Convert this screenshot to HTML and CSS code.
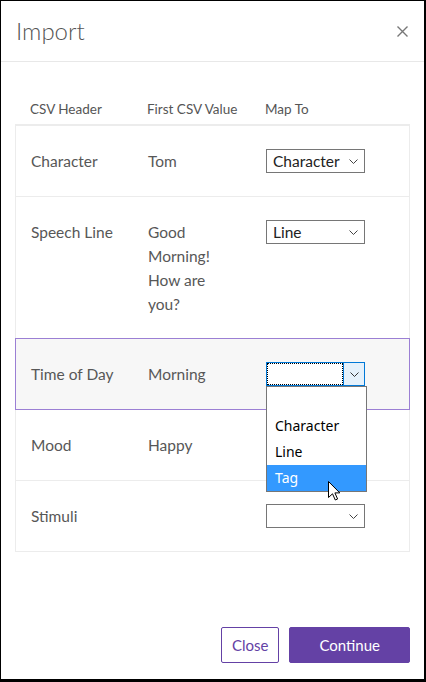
FILE: index.html
```html
<!DOCTYPE html>
<html lang="en">
<head>
<meta charset="utf-8">
<title>Import</title>
<link rel="stylesheet" href="styles.css">
</head>
<body>
<div class="window">
  <header class="dlg-head">
    <h1 class="title">Import</h1>
    <button class="close-x" aria-label="Close">
      <svg width="11" height="11" viewBox="0 0 11 11"><path d="M0.5 0.5 L10.5 10.5 M10.5 0.5 L0.5 10.5" stroke="#777" stroke-width="1.4" fill="none"/></svg>
    </button>
  </header>
  <main class="dlg-body">
    <div class="cols">
      <span>CSV Header</span><span>First CSV Value</span><span>Map To</span>
    </div>
    <div class="table">
      <div class="row">
        <div class="cell">Character</div>
        <div class="cell">Tom</div>
        <div class="cell"><div class="sel"><span class="sel-val">Character</span><svg class="chev" width="9" height="5" viewBox="0 0 9 5"><path d="M0.5 0.5 L4.5 4.5 L8.5 0.5" stroke="#444" fill="none"/></svg></div></div>
      </div>
      <div class="row">
        <div class="cell">Speech Line</div>
        <div class="cell"><span class="wrap">Good Morning! How are you?</span></div>
        <div class="cell"><div class="sel"><span class="sel-val">Line</span><svg class="chev" width="9" height="5" viewBox="0 0 9 5"><path d="M0.5 0.5 L4.5 4.5 L8.5 0.5" stroke="#444" fill="none"/></svg></div></div>
      </div>
      <div class="row selected">
        <div class="cell">Time of Day</div>
        <div class="cell">Morning</div>
        <div class="cell map">
          <div class="sel open">
            <span class="sel-focus"></span>
            <span class="sel-btn"><svg width="9" height="5" viewBox="0 0 9 5"><path d="M0.5 0.5 L4.5 4.5 L8.5 0.5" stroke="#333" fill="none"/></svg></span>
          </div>
          <ul class="dropdown">
            <li class="opt">&nbsp;</li>
            <li class="opt">Character</li>
            <li class="opt">Line</li>
            <li class="opt hl">Tag</li>
            <li class="cursor"><svg width="13" height="20" viewBox="0 0 13 20"><path d="M0.5 0.5 L0.5 16.5 L4.5 12.8 L7.3 19 L9.6 18 L6.9 11.9 L11.8 11.9 Z" fill="#fff" stroke="#000" stroke-width="1" stroke-linejoin="miter"/></svg></li>
          </ul>
        </div>
      </div>
      <div class="row">
        <div class="cell">Mood</div>
        <div class="cell">Happy</div>
        <div class="cell"></div>
      </div>
      <div class="row">
        <div class="cell">Stimuli</div>
        <div class="cell"></div>
        <div class="cell"><div class="sel"><span class="sel-val"></span><svg class="chev" width="9" height="5" viewBox="0 0 9 5"><path d="M0.5 0.5 L4.5 4.5 L8.5 0.5" stroke="#444" fill="none"/></svg></div></div>
      </div>
    </div>
  </main>
  <footer class="dlg-foot">
    <button class="btn ghost">Close</button>
    <button class="btn primary">Continue</button>
  </footer>
</div>
</body>
</html>
```

FILE: styles.css
```css
* { box-sizing: border-box; }
html, body { margin: 0; padding: 0; background: #fff; }
body { font-family: Lato, "Open Sans", sans-serif; color: #555; }

.window {
  width: 426px;
  height: 682px;
  border-style: solid;
  border-color: #000;
  border-width: 1px 2px 3px 1px;
  display: flex;
  flex-direction: column;
  background: #fff;
}

.dlg-head {
  height: 61px;
  border-bottom: 1px solid #e8e8e8;
  display: flex;
  align-items: center;
  justify-content: space-between;
  padding: 0 16px 0 15px;
}
.title {
  margin: 0;
  font-size: 24px;
  font-weight: 300;
  color: #555;
  line-height: 30px;
}
.close-x {
  border: 0;
  background: none;
  padding: 0;
  width: 11px;
  height: 11px;
  display: flex;
}

.dlg-body {
  flex: 1;
  padding: 37px 14px 0 14px;
}

.cols {
  display: grid;
  grid-template-columns: 117px 118px 1fr;
  padding-left: 15px;
  font-size: 13.5px;
  line-height: 20px;
  color: #555;
  margin-bottom: 5px;
}

.table {
  border: 1px solid #ececec;
  border-top-width: 2px;
}

.row {
  display: grid;
  grid-template-columns: 117px 118px 1fr;
  padding: 23px 0 23px 15px;
  border-bottom: 1px solid #ececec;
  font-size: 15.5px;
  line-height: 24px;
  color: #575757;
  background: #fff;
}
.row:last-child { border-bottom: 0; }
.row.selected {
  position: relative;
  z-index: 2;
  margin: -2px -1px 0 -1px;
  border: 1px solid #9b7fd4;
  padding-left: 15px;
  background: #f7f7f7;
}

.wrap { display: block; max-width: 78px; }

.cell { min-height: 24px; }
.map { position: relative; }

.sel {
  width: 99px;
  height: 24px;
  border: 1px solid #767676;
  background: #fff;
  display: flex;
  align-items: center;
  justify-content: space-between;
  padding: 0 6px 0 6px;
  color: #222;
  font-size: 15.5px;
  line-height: 22px;
}
.chev { flex: none; }

.sel.open {
  border-color: #0078d7;
  padding: 0;
  align-items: stretch;
}
.sel-focus {
  flex: 1;
  border: 1px dotted #000;
  background: #fff;
}
.sel-btn {
  width: 21px;
  background: #e5f1fb;
  border-left: 1px solid #0078d7;
  display: flex;
  align-items: center;
  justify-content: center;
}

.dropdown {
  position: absolute;
  left: 0;
  top: 24px;
  width: 101px;
  margin: 0;
  padding: 0;
  list-style: none;
  border: 1px solid #767676;
  background: #fff;
}
.opt {
  height: 26px;
  line-height: 26px;
  padding-left: 8px;
  font-family: "Noto Sans", "Open Sans", sans-serif;
  font-size: 14px;
  color: #000;
}
.opt.hl { background: #3399ff; color: #fff; }
.cursor {
  position: absolute;
  left: 61px;
  top: 94px;
  width: 13px;
  height: 20px;
}

.dlg-foot {
  display: flex;
  justify-content: flex-end;
  gap: 10px;
  padding: 0 14px 16px 14px;
}
.btn {
  height: 36px;
  font-family: Lato, "Open Sans", sans-serif;
  font-size: 15px;
  border-radius: 2px;
  border: 1px solid #6441a5;
  cursor: pointer;
}
.btn.ghost {
  background: #fff;
  color: #6441a5;
  padding: 0 10px;
}
.btn.primary {
  background: #6441a5;
  color: #fff;
  padding: 0 29px;
}
```
